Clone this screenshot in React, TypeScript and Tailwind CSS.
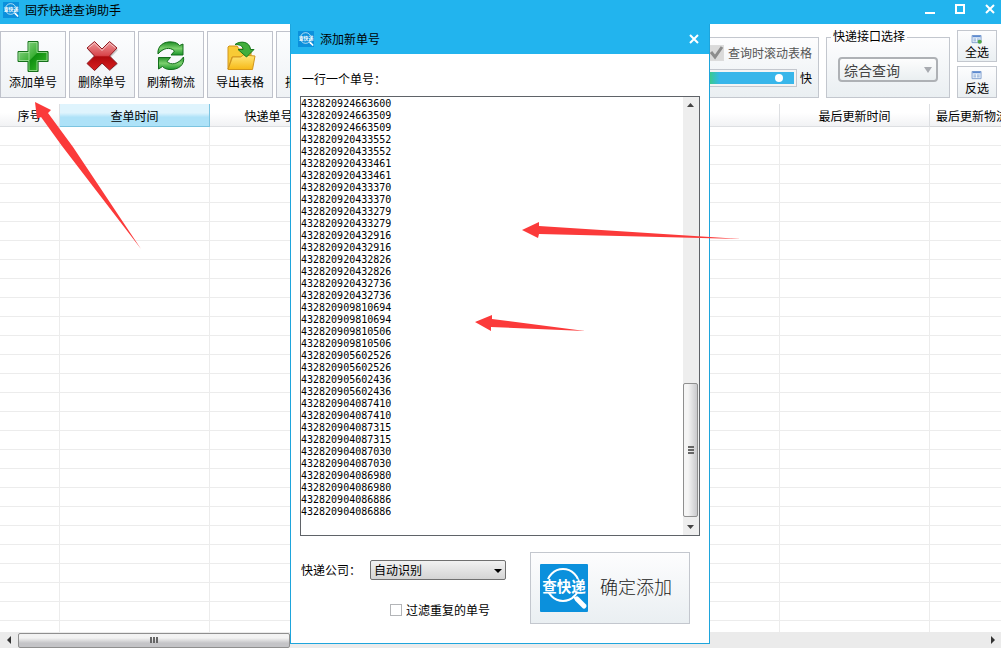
import React from "react";

const numbers = [
  "432820924663600", "432820924663509", "432820924663509", "432820920433552", "432820920433552",
  "432820920433461", "432820920433461", "432820920433370", "432820920433370", "432820920433279",
  "432820920433279", "432820920432916", "432820920432916", "432820920432826", "432820920432826",
  "432820920432736", "432820920432736", "432820909810694", "432820909810694", "432820909810506",
  "432820909810506", "432820905602526", "432820905602526", "432820905602436", "432820905602436",
  "432820904087410", "432820904087410", "432820904087315", "432820904087315", "432820904087030",
  "432820904087030", "432820904086980", "432820904086980", "432820904086886", "432820904086886",
];

const cjk = "font-['Noto_Sans_CJK_SC',sans-serif]";

function Logo({ className }: { className: string }) {
  return (
    <svg viewBox="0 0 48 48" className={className} aria-hidden="true">
      <rect width="48" height="48" rx="1" fill="#0b90dc" />
      <circle cx="23" cy="21" r="16" fill="none" stroke="#fff" strokeWidth="2" />
      <path d="M33 32l4 4" stroke="#fff" strokeWidth="2" />
      <path d="M37 35l7 7" stroke="#fff" strokeWidth="5" strokeLinecap="round" />
      <rect x="2" y="15" width="44" height="14" fill="#0b90dc" />
      <text x="24" y="28" textAnchor="middle" fontSize="14.500" fontWeight="700" fill="#fff" fontFamily="Noto Sans CJK SC, sans-serif">查快递</text>
    </svg>
  );
}

function AddIcon() {
  return (
    <svg viewBox="0 0 32 32" className="size-8" aria-hidden="true">
      <defs>
        <linearGradient id="gAdd" x1="0" y1="0" x2="1" y2="1">
          <stop offset="0" stopColor="#9fdc9b" />
          <stop offset=".5" stopColor="#3bb035" />
          <stop offset=".52" stopColor="#0f8f10" />
          <stop offset="1" stopColor="#3fc12f" />
        </linearGradient>
      </defs>
      <path d="M12 2h10v10h10v10H22v10H12V22H2V12h10z" fill="#00000030" />
      <path d="M11 1.500h10v10h10v10H21v10H11v-10H1v-10h10z" fill="url(#gAdd)" stroke="#14701a" />
      <path d="M12 20V2.500h8v10h10v8H20v10h-8v-10H2v-8h10" fill="none" stroke="#b5e8ae" strokeOpacity=".7" />
    </svg>
  );
}

function DeleteIcon() {
  return (
    <svg viewBox="0 0 32 32" className="size-8" aria-hidden="true">
      <defs>
        <linearGradient id="gDel" x1="0" y1="0" x2="0" y2="1">
          <stop offset="0" stopColor="#ee9a9c" />
          <stop offset=".48" stopColor="#d8454b" />
          <stop offset=".53" stopColor="#b00a0e" />
          <stop offset="1" stopColor="#d82020" />
        </linearGradient>
      </defs>
      <path d="M9 3l8 7 7-7 8 7-7 7 7 7-8 7-7-7-8 7-7-7 7-7-7-7z" fill="#00000030" />
      <path d="M8.500 1.500L16 9l7.500-7.500L31 8l-7.500 8L31 23.500 23.500 30 16 23l-7.500 7.500L1 23.500 8.500 16 1 8z" fill="url(#gDel)" stroke="#8e1a20" />
      <path d="M2.500 8l6-5L16 10.500 23.500 3l6 5" fill="none" stroke="#f7c6c6" />
    </svg>
  );
}

function RefreshIcon() {
  return (
    <svg viewBox="0 0 32 32" className="size-8" aria-hidden="true">
      <defs>
        <linearGradient id="gRef" x1="0" y1="0" x2="0" y2="1">
          <stop offset="0" stopColor="#1d8d24" />
          <stop offset=".5" stopColor="#7cd06e" />
          <stop offset="1" stopColor="#19962a" />
        </linearGradient>
      </defs>
      <path d="M3 14C2 6 9 1 17 2c3 0 6 1.500 7.500 3.500L28 4v11H16l3.500-4C15 6.500 8 8 3 14z" fill="url(#gRef)" stroke="#146e1c" strokeLinejoin="round" />
      <path d="M28.500 17C30 25 23 30 15 29.500c-3 0-5.500-1-7.500-3L3.500 29V17.500h12l-3.500 4c4 4 11 3 16.500-4.500z" fill="url(#gRef)" stroke="#146e1c" strokeLinejoin="round" />
    </svg>
  );
}

function ExportIcon() {
  return (
    <svg viewBox="0 0 32 32" className="size-8" aria-hidden="true">
      <defs>
        <linearGradient id="gFold" x1="0" y1="0" x2="0" y2="1">
          <stop offset="0" stopColor="#ffe77a" />
          <stop offset="1" stopColor="#f7b916" />
        </linearGradient>
      </defs>
      <path d="M4 29V7l1-1h8l2 3h12v8H8z" fill="#f8cb36" stroke="#d2951c" />
      <path d="M4 29.500L8.500 17h8l3-2 11.500 1-2.500 13.500z" fill="url(#gFold)" stroke="#d2951c" />
      <path d="M11 4.500C17 0 26 2 26.500 9.500H30L22.500 17 14 9.500h5C19 5.500 15 4.500 11 4.500z" fill="#41ae3c" stroke="#16781d" strokeLinejoin="round" />
    </svg>
  );
}

function GridIcon({ badge }: { badge: boolean }) {
  return (
    <svg viewBox="0 0 12 10" className="h-2.5 w-3" aria-hidden="true">
      <path d="M.5.5h10v8H.5z" fill="#f0f6fd" stroke="#7b9bcb" />
      <path d="M1 1.500h9" stroke="#5d8ad0" strokeWidth="2" />
      <path d="M2 4.500h3m1 0h3M2 6.500h3m1 0h3" stroke="#7b9fce" />
      {badge && <circle cx="9" cy="7.500" r="2.300" fill="#50a844" />}
    </svg>
  );
}

const tools = [
  { label: "添加单号", icon: <AddIcon /> },
  { label: "删除单号", icon: <DeleteIcon /> },
  { label: "刷新物流", icon: <RefreshIcon /> },
  { label: "导出表格", icon: <ExportIcon /> },
  { label: "批量查询", icon: null },
];

function CloseIcon() {
  return (
    <svg viewBox="0 0 10 10" className="size-2.5" aria-hidden="true">
      <path d="M1 1l8 8M9 1L1 9" stroke="#fff" strokeWidth="2" />
    </svg>
  );
}

function TitleBar() {
  return (
    <header className="flex h-6 shrink-0 items-center justify-between bg-[#22b4ee] pr-1.5 pl-[3px]">
      <div className="flex items-center gap-1.5 pb-1">
        <Logo className="size-4" />
        <h1>固乔快递查询助手</h1>
      </div>
      <div className="flex items-center gap-5 pb-1.5">
        <button aria-label="最小化" className="flex h-2.5 w-2.5 items-end"><span className="h-0.5 w-full bg-white" /></button>
        <button aria-label="最大化" className="h-2.5 w-2.5 border-2 border-white" />
        <button aria-label="关闭"><CloseIcon /></button>
      </div>
    </header>
  );
}

const panel = "border border-[#c3c7ce] bg-linear-to-b from-[#fdfdfe] to-[#eaeff2]";

function Toolbar() {
  return (
    <div className="flex h-20 shrink-0 items-start justify-between pt-1.5 pr-1">
      <div className="flex gap-[3px] pt-px">
        {tools.map((t) => (
          <button key={t.label} className="flex h-[67px] w-[66px] shrink-0 flex-col items-center justify-between border border-[#bfc2cb] bg-linear-to-b from-[#fcfdfe] to-[#eff2f5] pt-2 pb-1.5">
            <span className="size-8">{t.icon}</span>
            <span>{t.label}</span>
          </button>
        ))}
      </div>
      <div className="flex gap-[7px]">
        <div className={`mt-[7px] flex h-[61px] w-[150px] flex-col justify-between pt-1.5 pr-1.5 pb-2.5 ${panel}`}>
          <label className="flex items-center justify-end gap-1 text-[#555]">
            <span className="relative flex size-4">
              <input type="checkbox" defaultChecked className="size-4 appearance-none border border-[#dcdcdc] bg-[#dadada]" />
              <svg viewBox="0 0 16 16" className="pointer-events-none absolute inset-0" aria-hidden="true">
                <path d="M3 7l4 5 7-10" fill="none" stroke="#8c8c8c" strokeWidth="3" />
              </svg>
            </span>
            查询时滚动表格
          </label>
          <label className="flex items-center justify-end gap-1">
            <input type="range" aria-label="滚动速度" defaultValue={90} className="h-4 w-[118px] appearance-none border-2 border-[#f4f4f4] bg-linear-to-r from-[#3ecb7c] from-25% to-[#38b6ea] to-35% outline outline-[#c3c7ce] [&::-webkit-slider-thumb]:size-2 [&::-webkit-slider-thumb]:appearance-none [&::-webkit-slider-thumb]:rounded-full [&::-webkit-slider-thumb]:bg-white" />
            快
          </label>
        </div>
        <fieldset className="h-[68px] w-[124px]">
          <div className={`relative mt-[7px] flex h-[61px] items-center px-[11px] pt-1 ${panel}`}>
            <label htmlFor="api" className="absolute -top-2.5 left-1 bg-linear-to-b from-white to-[#fcfcfd] px-0.5 leading-4">快递接口选择</label>
            <span className="relative w-full">
              <select id="api" className="block h-[25px] w-full appearance-none rounded-sm border-2 border-[#aeb1b5] bg-linear-to-b from-[#fdfdfd] to-[#eaeff1] pl-1 text-[14px] leading-[18px] text-[#444]">
                <option>综合查询</option>
              </select>
              <svg viewBox="0 0 8 6" className="pointer-events-none absolute top-2.5 right-1.5 h-1.5 w-2" aria-hidden="true"><path d="M0 0h8L4 6z" fill="#a8abb0" /></svg>
            </span>
          </div>
        </fieldset>
        <div className="flex flex-col gap-1">
          <button className={`flex h-8 w-10 flex-col items-center justify-between pt-1 pb-px ${panel}`}><GridIcon badge /><span className="leading-4">全选</span></button>
          <button className={`flex h-8 w-10 flex-col items-center justify-between pt-1 pb-px ${panel}`}><GridIcon badge={false} /><span className="leading-4">反选</span></button>
        </div>
      </div>
    </div>
  );
}

function Grid() {
  const columns = ["序号", "查单时间", "快递单号", "", "最后更新时间", "最后更新物流"];
  return (
    <div className="h-0 grow overflow-hidden">
      <table className="w-[1080px] table-fixed border-separate border-spacing-0">
        <colgroup>
          <col className="w-[60px]" />
          <col className="w-[150px]" />
          <col className="w-[118px]" />
          <col className="w-[452px]" />
          <col className="w-[150px]" />
          <col />
        </colgroup>
        <thead>
          <tr>
            {columns.map((c, i) => (
              <th
                key={i}
                className={
                  i === 1
                    ? "h-[23px] border-r border-b border-[#7cc4e0] bg-linear-to-b from-[#dff4fd] from-40% to-[#aee2f8] to-60% p-0 pt-0.5 font-normal"
                    : i === 5
                      ? "h-[23px] border-b border-[#d3d5d8] bg-linear-to-b from-white from-40% to-[#f1f2f4] p-0 pt-0.5 pl-1.5 text-left font-normal whitespace-nowrap"
                      : "h-[23px] border-r border-b border-[#dddfe2] bg-linear-to-b from-white from-40% to-[#f1f2f4] p-0 pt-0.5 font-normal"
                }
              >
                {c}
              </th>
            ))}
          </tr>
        </thead>
        <tbody>
          {Array.from({ length: 40 }, (_, r) => (
            <tr key={r}>
              {columns.map((_, i) => (
                <td key={i} className={i === 2 || i === 5 ? "h-[19px] border-b border-[#ececec] p-0" : "h-[19px] border-r border-b border-[#ececec] p-0"} />
              ))}
            </tr>
          ))}
        </tbody>
      </table>
    </div>
  );
}

function HorizontalBar() {
  return (
    <div className="mb-0.5 flex h-4 shrink-0 items-center justify-between bg-[#ebebeb] pr-1.5">
      <div className="flex items-center">
        <svg viewBox="0 0 4 8" className="mx-1.5 h-2 w-1.5" aria-hidden="true"><path d="M4 0v8L0 4z" fill="#333" /></svg>
        <div className="flex h-[15px] w-[272px] items-center justify-center gap-px rounded-xs border border-[#8f8f8f] bg-linear-to-b from-[#f3f3f3] from-30% to-[#c4c4c7] to-70%">
          <span className="h-1.5 w-0.5 bg-[#666]" /><span className="h-1.5 w-0.5 bg-[#666]" /><span className="h-1.5 w-0.5 bg-[#666]" />
        </div>
      </div>
      <svg viewBox="0 0 4 8" className="h-2 w-1" aria-hidden="true"><path d="M0 0v8l4-4z" fill="#333" /></svg>
    </div>
  );
}

function VerticalBar() {
  return (
    <div className="flex w-4 shrink-0 flex-col items-start bg-[#eeeeee]">
      <svg viewBox="0 0 7 4" className="mt-1.5 ml-1 h-1 w-[7px]" aria-hidden="true"><path d="M0 4h7L3.500 0z" fill="#444" /></svg>
      <div className="grow" />
      <div className="flex h-[134px] w-[15px] flex-col items-center justify-center gap-px rounded-xs border border-[#8f8f8f] bg-linear-to-r from-[#f5f5f5] from-30% to-[#c9c9cc]">
        <span className="h-0.5 w-1.5 bg-[#666]" /><span className="h-0.5 w-1.5 bg-[#666]" /><span className="h-0.5 w-1.5 bg-[#666]" />
      </div>
      <svg viewBox="0 0 7 4" className="mt-2 mb-1.5 ml-1 h-1 w-[7px]" aria-hidden="true"><path d="M0 0h7L3.500 4z" fill="#444" /></svg>
    </div>
  );
}

function AddDialog() {
  return (
    <section role="dialog" aria-labelledby="dlg" className="absolute top-6 left-[290px] w-[420px] border border-t-0 border-[#1ea5dc] bg-white">
      <div className="flex h-[30px] items-center justify-between bg-[#22b4ee] pr-2.5 pl-[7px]">
        <div className="flex items-center gap-1.5">
          <Logo className="size-4" />
          <h2 id="dlg">添加新单号</h2>
        </div>
        <button aria-label="关闭"><CloseIcon /></button>
      </div>
      <div className="px-[9px] pt-4 pb-[19px]">
        <label htmlFor="list" className="block h-[26px] pl-0.5">一行一个单号：</label>
        <div className="flex h-[440px] border border-[#5f6368] bg-white">
          <textarea id="list" defaultValue={numbers.join("\n")} className="block h-full grow resize-none overflow-hidden p-0 pt-px font-['DejaVu_Sans_Mono',monospace] text-[10px] leading-3 outline-none" />
          <VerticalBar />
        </div>
        <div className="flex items-start justify-between pt-4 pr-2.5">
          <div className="pt-2">
            <div className="flex h-5 items-center pl-px">
              <label htmlFor="company" className="w-[69px]">快递公司：</label>
              <span className="relative">
                <select id="company" className="block h-5 w-[136px] appearance-none rounded-xs border border-[#707070] bg-linear-to-b from-[#f2f2f2] to-[#d4d4d4] pl-[3px] leading-[18px]">
                  <option>自动识别</option>
                </select>
                <svg viewBox="0 0 8 4" className="pointer-events-none absolute top-[9px] right-1 h-1 w-2" aria-hidden="true"><path d="M0 0h8L4 4z" fill="#000" /></svg>
              </span>
            </div>
            <label className="mt-5 ml-[90px] flex h-5 items-center gap-1">
              <input type="checkbox" className="size-3 appearance-none border border-[#b3b5b8] bg-white" />
              过滤重复的单号
            </label>
          </div>
          <button className={`flex h-[72px] w-40 items-center gap-3 pl-[9px] text-[18px] font-light text-[#222] ${panel}`}>
            <Logo className="size-12" />
            <span className="pb-1">确定添加</span>
          </button>
        </div>
      </div>
    </section>
  );
}

export default function App() {
  return (
    <main className={`relative flex h-screen flex-col overflow-hidden bg-white text-[12px] leading-[18px] text-black ${cjk}`}>
      <TitleBar />
      <Toolbar />
      <Grid />
      <HorizontalBar />
      <AddDialog />
      <svg viewBox="0 0 1001 650" className="pointer-events-none absolute top-0 left-0 h-[650px] w-[1001px]" fill="#fb3a3a" aria-hidden="true">
        <path d="M35 102L51 110L48 113L73 147L141 249L62 146L41 117L37 119Z" />
        <path d="M522 230L539 222V226L741 239L539 234L538 238Z" />
        <path d="M475 322L492 315V319L585 331L491 327V331Z" />
      </svg>
    </main>
  );
}
